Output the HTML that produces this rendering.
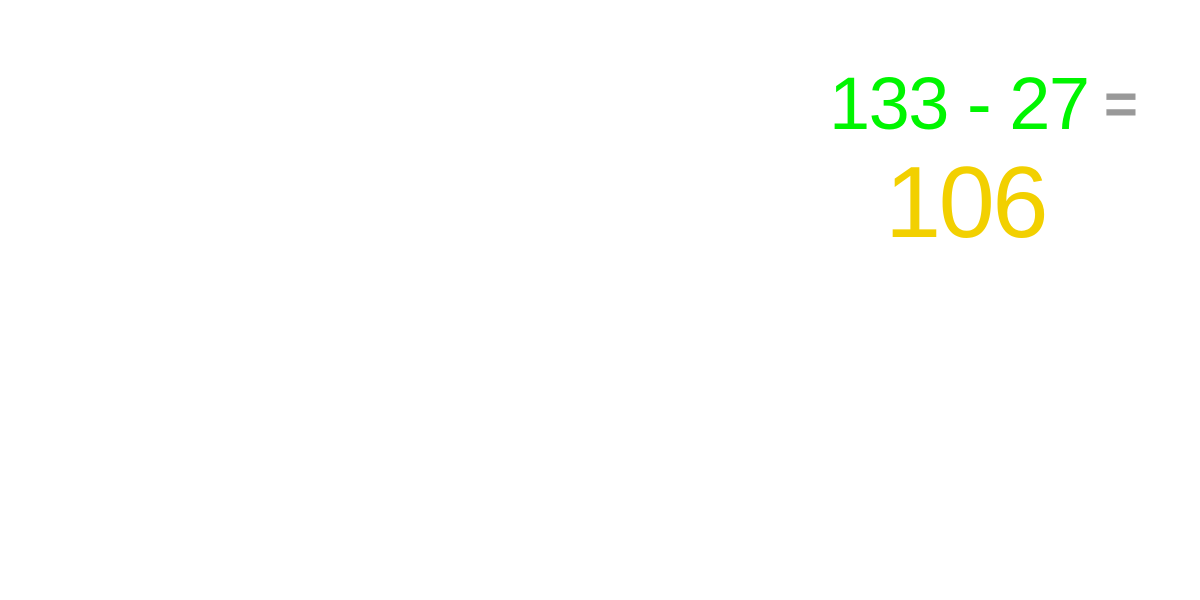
<!DOCTYPE html>
<html><head><style>
html,body{margin:0;padding:0;background:#fff;width:1200px;height:600px;overflow:hidden;}
.t{position:absolute;font-family:"Liberation Sans",sans-serif;white-space:nowrap;line-height:1;}
</style></head><body>
<div class="t" style="left:829px;top:67px;font-size:74px;color:#00f500;letter-spacing:-1.5px;">133 - 27</div>
<div class="t" style="left:1104px;top:76px;font-size:58px;color:#999;font-weight:bold;">=</div>
<div class="t" style="left:885px;top:153px;font-size:101px;color:#f2d000;letter-spacing:-2.5px;">106</div>
</body></html>
